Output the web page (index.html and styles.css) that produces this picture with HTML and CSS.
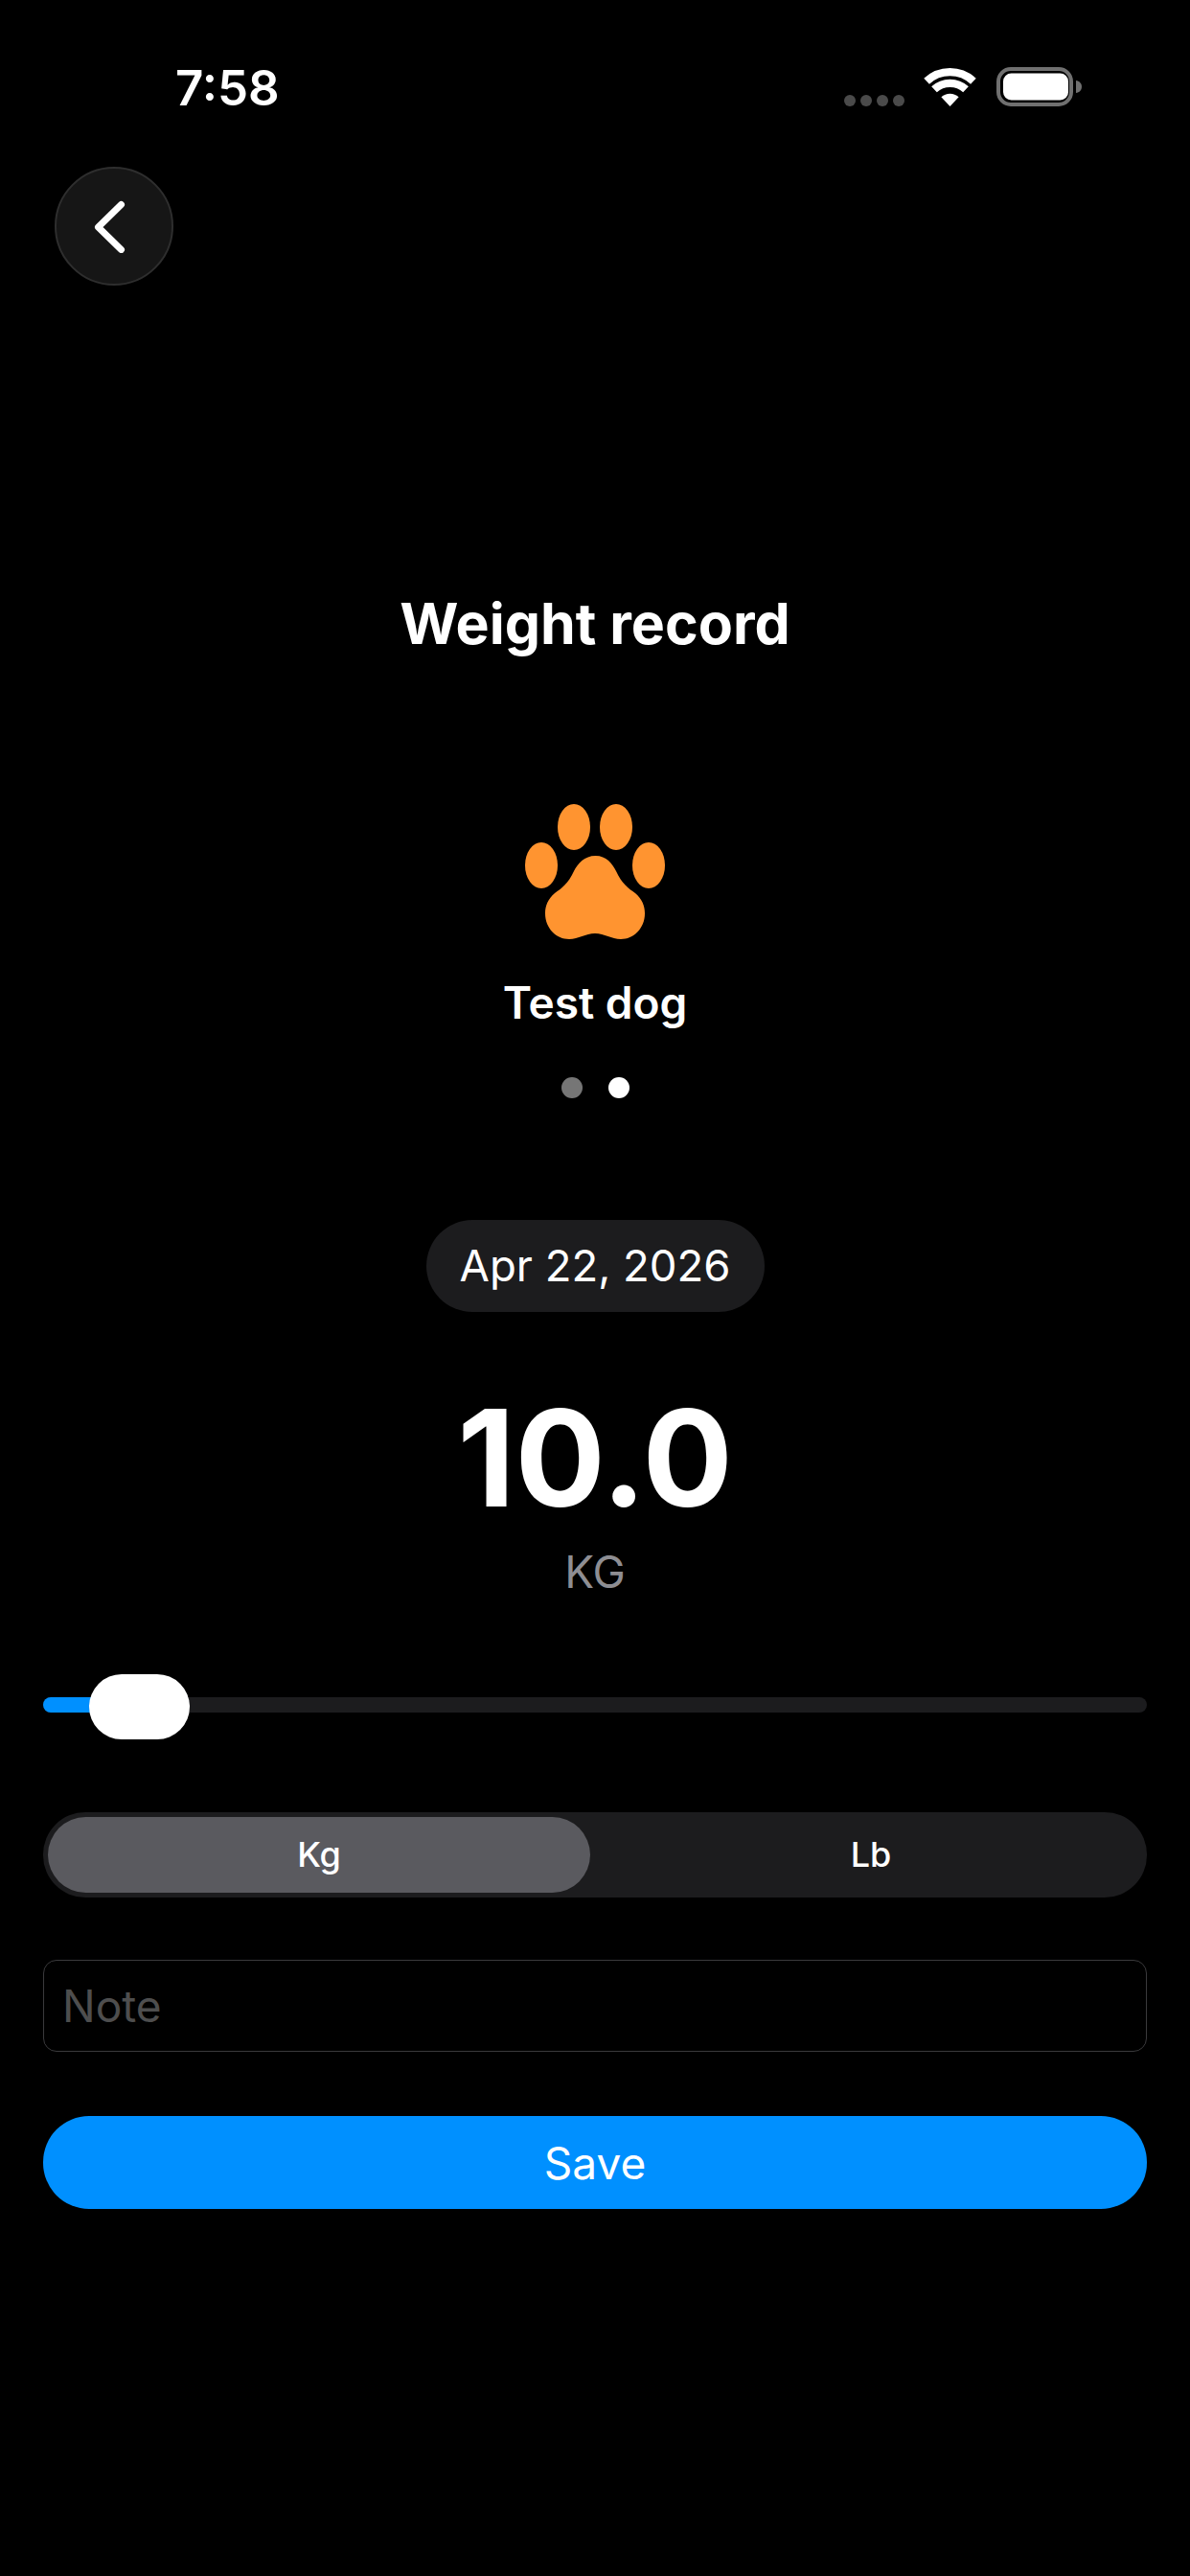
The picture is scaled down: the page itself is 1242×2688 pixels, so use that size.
FILE: index.html
```html
<!DOCTYPE html>
<html lang="en">
<head>
    <meta charset="UTF-8">
    <meta name="viewport" content="width=device-width, initial-scale=1.0">
    <title>Weight record</title>
    <link rel="stylesheet" href="styles.css">
</head>
<body>
    <div class="status-bar">
        <span class="status-time">7:58</span>
        <div class="status-icons">
            <div class="signal-dots">
                <span></span><span></span><span></span><span></span>
            </div>
            <svg class="wifi-icon" width="55" height="40" viewBox="0 0 55 40">
                <path d="M3.1 13.8A35.8 35.8 0 0 1 51.9 13.8" fill="none" stroke="#fff" stroke-width="8.3"/>
                <path d="M11 22.3A24.2 24.2 0 0 1 44 22.3" fill="none" stroke="#fff" stroke-width="8.3"/>
                <path d="M27.5 40L18.4 30.3A13.3 13.3 0 0 1 36.6 30.3Z" fill="#fff"/>
            </svg>
            <svg class="battery-icon" width="89" height="41" viewBox="0 0 89 41">
                <rect x="2" y="2" width="76" height="37" rx="13" fill="none" stroke="#707070" stroke-width="4"/>
                <rect x="7" y="6.5" width="68" height="28" rx="8.5" fill="#fff"/>
                <path d="M83 14C86.500 14.500 89 17 89 20.500C89 24 86.500 26.500 83 27Z" fill="#707070"/>
            </svg>
        </div>
    </div>

    <main class="screen">
        <button class="back-button" type="button" aria-label="Back">
            <svg width="34" height="56" viewBox="0 0 34 56">
                <path d="M28.500 5.500L4.500 29L28.500 52.500" fill="none" stroke="#fff" stroke-width="7" stroke-linecap="round" stroke-linejoin="round"/>
            </svg>
        </button>

        <h1 class="page-title">Weight record</h1>

        <div class="pet-picker">
            <svg class="paw-icon" width="146" height="142" viewBox="0 0 146 142">
                <g fill="#ff9430">
                    <ellipse cx="17" cy="64" rx="17" ry="24"/>
                    <ellipse cx="51" cy="24" rx="17" ry="24"/>
                    <ellipse cx="95" cy="24" rx="17" ry="24"/>
                    <ellipse cx="129" cy="64" rx="17" ry="24"/>
                    <path d="M73.500 54C85 54 91 62 95 70C101 83 108 88 115 93C122 99 125 106 125 114C125 130 113 141 100 141C90 141 83 135 73 135C63 135 56 141 46 141C33 141 21 130 21 114C21 106 24 99 31 93C38 88 45 83 51 70C55 62 62 54 73.500 54Z"/>
                </g>
            </svg>
            <div class="pet-name">Test dog</div>
            <div class="pager">
                <span class="pager-dot"></span>
                <span class="pager-dot active"></span>
            </div>
        </div>

        <div class="date-pill">Apr 22, 2026</div>

        <div class="weight-value">10.0</div>
        <div class="weight-unit">KG</div>

        <div class="slider">
            <div class="slider-fill"></div>
            <div class="slider-thumb"></div>
        </div>

        <div class="unit-switch">
            <div class="unit-option active">Kg</div>
            <div class="unit-option">Lb</div>
        </div>

        <input class="note-input" type="text" placeholder="Note">

        <button class="save-button" type="button">Save</button>
    </main>
</body>
</html>
```

FILE: styles.css
```css
body {
    margin: 0;
    background-color: #000;
    color: #fff;
    font-family: Inter, "Liberation Sans", sans-serif;
}

.status-bar {
    display: flex;
    justify-content: space-between;
    align-items: flex-start;
    height: 174px;
    padding: 62px 113px 0 183px;
    box-sizing: border-box;
}

.status-time {
    font-size: 51px;
    font-weight: 600;
    line-height: 60px;
}

.status-icons {
    display: flex;
    align-items: flex-end;
    margin-top: 8px;
}

.signal-dots {
    display: flex;
    gap: 5px;
    margin-right: 20px;
}

.signal-dots span {
    width: 12px;
    height: 12px;
    border-radius: 50%;
    background-color: #4a4a4a;
}

.wifi-icon {
    margin-right: 21px;
}

.screen {
    display: flex;
    flex-direction: column;
    align-items: center;
    padding: 0 45px;
}

.back-button {
    align-self: flex-start;
    display: flex;
    align-items: center;
    justify-content: center;
    width: 124px;
    height: 124px;
    margin-left: 12px;
    padding: 0 8px 0 0;
    border: 2px solid #2e2e2e;
    border-radius: 50%;
    background-color: #161616;
}

.page-title {
    margin: 317px 0 0;
    font-size: 59px;
    font-weight: 700;
    line-height: 72px;
}

.pet-picker {
    display: flex;
    flex-direction: column;
    align-items: center;
    margin-top: 152px;
}

.paw-icon {
    display: block;
}

.pet-name {
    margin-top: 38px;
    font-size: 46px;
    font-weight: 600;
    line-height: 54px;
}

.pager {
    display: flex;
    gap: 27px;
    margin-top: 51px;
}

.pager-dot {
    width: 22px;
    height: 22px;
    border-radius: 50%;
    background-color: #767676;
}

.pager-dot.active {
    background-color: #fff;
}

.date-pill {
    margin-top: 127px;
    padding: 0 35px;
    border-radius: 48px;
    background-color: #1c1c1e;
    font-size: 45.5px;
    line-height: 96px;
}

.weight-value {
    margin-top: 67px;
    font-size: 140px;
    font-weight: 700;
    line-height: 170px;
}

.weight-unit {
    margin-top: 6px;
    color: #8e8e93;
    font-size: 46px;
    line-height: 56px;
}

.slider {
    position: relative;
    align-self: stretch;
    height: 16px;
    margin-top: 103px;
    border-radius: 8px;
    background-color: #1c1c1e;
}

.slider-fill {
    width: 60px;
    height: 100%;
    border-radius: 8px 0 0 8px;
    background-color: #0090ff;
}

.slider-thumb {
    position: absolute;
    left: 48px;
    top: -24px;
    width: 105px;
    height: 68px;
    border-radius: 34px;
    background-color: #fff;
}

.unit-switch {
    display: grid;
    grid-template-columns: 1fr 1fr;
    gap: 10px;
    align-self: stretch;
    margin-top: 104px;
    padding: 5px;
    border-radius: 44px;
    background-color: #1c1c1e;
}

.unit-option {
    border-radius: 40px;
    font-size: 36px;
    font-weight: 500;
    line-height: 79px;
    text-align: center;
}

.unit-option.active {
    background-color: #5a5a5f;
}

.note-input {
    align-self: stretch;
    height: 96px;
    margin-top: 65px;
    padding: 0 19px;
    box-sizing: border-box;
    border: 1px solid #3a3a3c;
    border-radius: 14px;
    background-color: #000;
    color: #fff;
    font-family: inherit;
    font-size: 46px;
}

.note-input::placeholder {
    color: #4e4e4e;
    opacity: 1;
}

.save-button {
    align-self: stretch;
    height: 97px;
    margin-top: 67px;
    border: none;
    border-radius: 48px;
    background-color: #0090ff;
    color: #fff;
    font-family: inherit;
    font-size: 46px;
}
```
